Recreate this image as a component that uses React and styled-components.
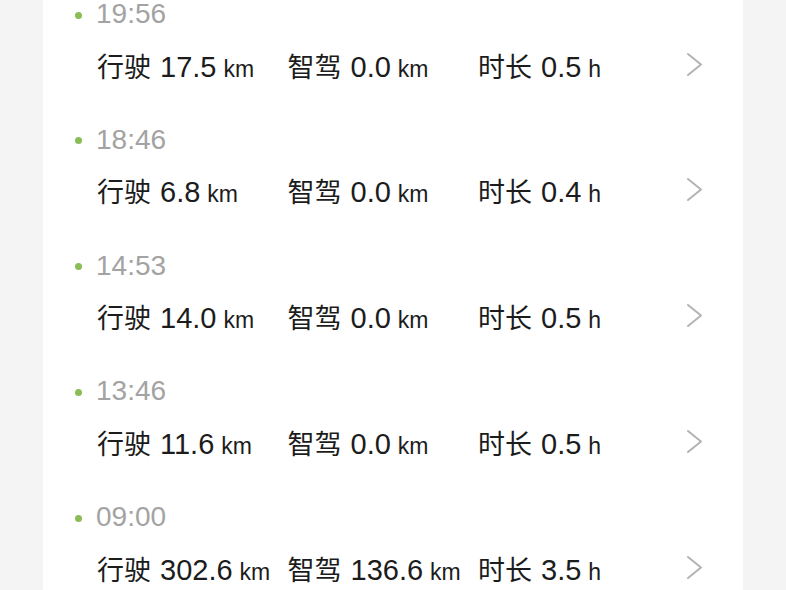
import React from "react";
import styled, { createGlobalStyle } from "styled-components";

const GlobalStyle = createGlobalStyle`
  html, body {
    margin: 0;
    padding: 0;
    background: #f4f4f4;
    overflow: hidden;
  }
  body {
    font-family: "Liberation Sans", "Noto Sans CJK SC", sans-serif;
    -webkit-font-smoothing: antialiased;
  }
`;

const Page = styled.main`
  width: 786px;
  height: 590px;
  overflow: hidden;
`;

const Card = styled.section`
  width: 700px;
  margin: -3px 0 0 43px;
  background: #ffffff;
`;

const Row = styled.div`
  display: flex;
  flex-direction: column;
  padding-bottom: 37.75px;
`;

const TimeLine = styled.div`
  display: flex;
  align-items: center;
  height: 34px;
  padding-left: 32px;
  gap: 14px;
`;

const Dot = styled.span`
  width: 7px;
  height: 7px;
  border-radius: 50%;
  background: #8bbd57;
  margin-top: 2px;
`;

const Time = styled.span`
  font-size: 28px;
  color: #a3a3a3;
  line-height: 34px;
`;

const StatLine = styled.div`
  display: flex;
  align-items: center;
  height: 36px;
  margin-top: 18px;
  padding-left: 54px;
`;

const Stats = styled.div`
  display: grid;
  grid-template-columns: repeat(3, 190.5px);
`;

const Stat = styled.div`
  display: flex;
  align-items: baseline;
  white-space: nowrap;
  color: #1c1c1c;
  line-height: 36px;
`;

const Label = styled.span`
  font-family: "Noto Sans CJK SC", sans-serif;
  font-size: 27px;
  margin-right: 9px;
`;

const Value = styled.span`
  font-size: 29px;
`;

const Unit = styled.span`
  font-size: 23px;
  margin-left: 7px;
`;

const Chevron = styled.svg`
  width: 18px;
  height: 25px;
  margin-left: 17.5px;
  margin-top: -6px;
  flex-shrink: 0;
`;

const trips = [
  { time: "19:56", drive: "17.5", smart: "0.0", hours: "0.5" },
  { time: "18:46", drive: "6.8", smart: "0.0", hours: "0.4" },
  { time: "14:53", drive: "14.0", smart: "0.0", hours: "0.5" },
  { time: "13:46", drive: "11.6", smart: "0.0", hours: "0.5" },
  { time: "09:00", drive: "302.6", smart: "136.6", hours: "3.5" },
];

const StatItem = ({ label, value, unit }) => (
  <Stat>
    <Label>{label}</Label>
    <Value>{value}</Value>
    <Unit>{unit}</Unit>
  </Stat>
);

export default function App() {
  return (
    <Page>
      <GlobalStyle />
      <Card>
        {trips.map((t) => (
          <Row key={t.time}>
            <TimeLine>
              <Dot />
              <Time>{t.time}</Time>
            </TimeLine>
            <StatLine>
              <Stats>
                <StatItem label="行驶" value={t.drive} unit="km" />
                <StatItem label="智驾" value={t.smart} unit="km" />
                <StatItem label="时长" value={t.hours} unit="h" />
              </Stats>
              <Chevron viewBox="0 0 18 25" fill="none">
                <path
                  d="M2 2 L15 12.5 L2 23"
                  stroke="#b3b3b3"
                  strokeWidth="2"
                  strokeLinecap="round"
                  strokeLinejoin="round"
                />
              </Chevron>
            </StatLine>
          </Row>
        ))}
      </Card>
    </Page>
  );
}
